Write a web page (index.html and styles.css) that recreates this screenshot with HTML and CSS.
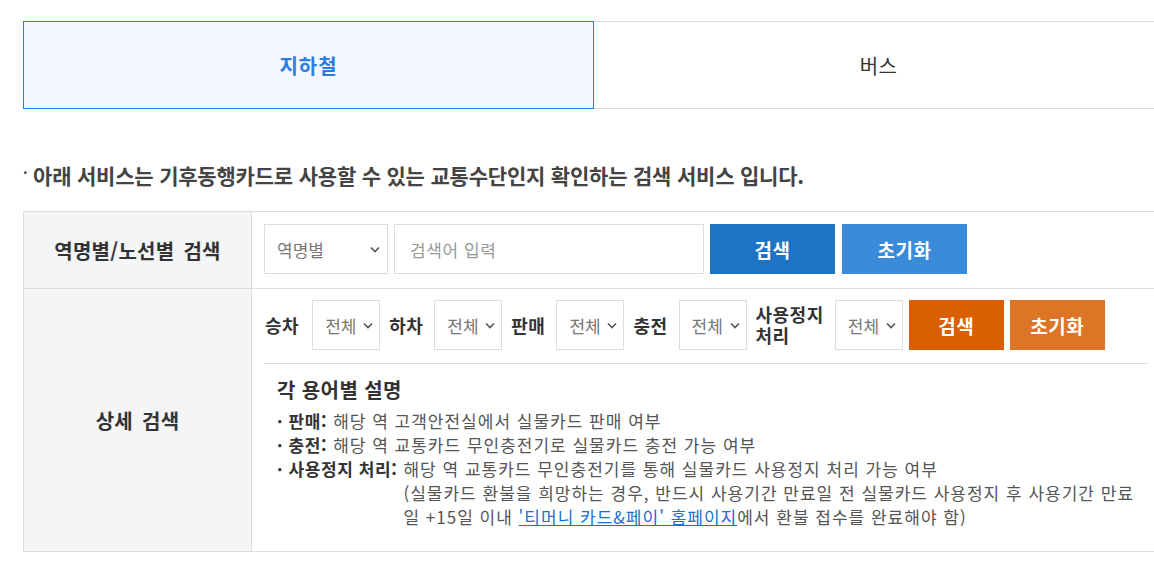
FILE: index.html
```html
<!DOCTYPE html>
<html lang="ko">
<head>
<meta charset="utf-8">
<link rel="stylesheet" href="styles.css">
</head>
<body>
<div class="wrap">
  <div class="tabs">
    <div class="tab active">지하철</div>
    <div class="tab">버스</div>
  </div>
  <p class="notice"><span class="dot">·</span> 아래 서비스는 기후동행카드로 사용할 수 있는 교통수단인지 확인하는 검색 서비스 입니다.</p>
  <div class="table">
    <div class="th">역명별/노선별 검색</div>
    <div class="td row1">
      <div class="sel sel-wide">역명별<svg class="chev" viewBox="0 0 10 6"><path d="M1 1l4 4 4-4" fill="none" stroke="#555" stroke-width="1.6"/></svg></div>
      <div class="input">검색어 입력</div>
      <button class="btn blue">검색</button>
      <button class="btn lblue">초기화</button>
    </div>
    <div class="th tall">상세 검색</div>
    <div class="td row2">
      <div class="controls">
        <span class="lab first">승차</span>
        <div class="sel sel-s">전체<svg class="chev" viewBox="0 0 10 6"><path d="M1 1l4 4 4-4" fill="none" stroke="#555" stroke-width="1.6"/></svg></div>
        <span class="lab">하차</span>
        <div class="sel sel-s">전체<svg class="chev" viewBox="0 0 10 6"><path d="M1 1l4 4 4-4" fill="none" stroke="#555" stroke-width="1.6"/></svg></div>
        <span class="lab">판매</span>
        <div class="sel sel-s">전체<svg class="chev" viewBox="0 0 10 6"><path d="M1 1l4 4 4-4" fill="none" stroke="#555" stroke-width="1.6"/></svg></div>
        <span class="lab">충전</span>
        <div class="sel sel-s">전체<svg class="chev" viewBox="0 0 10 6"><path d="M1 1l4 4 4-4" fill="none" stroke="#555" stroke-width="1.6"/></svg></div>
        <span class="lab two">사용정지<br>처리</span>
        <div class="sel sel-s">전체<svg class="chev" viewBox="0 0 10 6"><path d="M1 1l4 4 4-4" fill="none" stroke="#555" stroke-width="1.6"/></svg></div>
        <button class="btn orange">검색</button>
        <button class="btn lorange">초기화</button>
      </div>
      <div class="desc">
        <h3>각 용어별 설명</h3>
        <div class="item"><span class="b">· 판매:</span><span class="t">해당 역 고객안전실에서 실물카드 판매 여부</span></div>
        <div class="item"><span class="b">· 충전:</span><span class="t">해당 역 교통카드 무인충전기로 실물카드 충전 가능 여부</span></div>
        <div class="item"><span class="b">· 사용정지 처리:</span><span class="t">해당 역 교통카드 무인충전기를 통해 실물카드 사용정지 처리 가능 여부<br>(실물카드 환불을 희망하는 경우, 반드시 사용기간 만료일 전 실물카드 사용정지 후 사용기간 만료일 +15일 이내 <a href="#">'티머니 카드&amp;페이' 홈페이지</a>에서 환불 접수를 완료해야 함)</span></div>
      </div>
    </div>
  </div>
</div>
</body>
</html>
```

FILE: styles.css
```css
html, body {
  margin: 0;
  padding: 0;
  overflow: hidden;
  background: #fff;
}
body {
  font-family: "Noto Sans CJK KR", "Noto Sans", sans-serif;
  color: #333;
}
.wrap {
  width: 1140px;
  margin-left: 23px;
  padding-top: 21px;
}
.tabs {
  display: flex;
  height: 88px;
}
.tab {
  flex: 1;
  display: flex;
  align-items: center;
  justify-content: center;
  border-top: 1px solid #ddd;
  border-bottom: 1px solid #ddd;
  font-size: 20px;
  letter-spacing: 0.3px;
  color: #333;
  box-sizing: border-box;
}
.tab.active {
  border: 1px solid #2b7de0;
  background: #f3f8ff;
  color: #2b7de0;
  font-weight: 700;
  letter-spacing: 1px;
}
.notice {
  margin: 53px 0 0 0;
  font-size: 21px;
  font-weight: 700;
  color: #444;
  line-height: 26px;
  letter-spacing: -0.2px;
}
.notice .dot {
  position: relative;
  top: -6px;
  font-size: 14px;
  line-height: 0;
}
.table {
  margin-top: 23px;
  display: grid;
  grid-template-columns: 228px 1fr;
  border-top: 1px solid #ddd;
  border-left: 1px solid #ddd;
}
.th {
  background: #f4f5f7;
  border-right: 1px solid #ddd;
  border-bottom: 1px solid #ddd;
  display: flex;
  align-items: center;
  justify-content: center;
  font-size: 20px;
  letter-spacing: 0.3px;
  word-spacing: 3px;
  font-weight: 700;
  color: #333;
  height: 76px;
}
.th.tall {
  height: auto;
}
.td {
  border-bottom: 1px solid #ddd;
  padding: 12px 15px 0 12px;
}
.row1 {
  display: flex;
  align-items: flex-start;
  gap: 6px;
}
.sel {
  position: relative;
  box-sizing: border-box;
  height: 50px;
  border: 1px solid #ddd;
  background: #fff;
  display: flex;
  align-items: center;
  font-size: 17px;
  color: #777;
  padding-left: 12px;
}
.sel-wide { width: 124px; }
.sel-s { width: 68px; }
.chev {
  position: absolute;
  right: 6px;
  top: 21px;
  width: 10px;
  height: 7px;
}
.sel-wide .chev { right: 7px; }
.input {
  box-sizing: border-box;
  width: 310px;
  height: 50px;
  border: 1px solid #ddd;
  display: flex;
  align-items: center;
  padding-left: 15px;
  font-size: 17px;
  letter-spacing: 0.6px;
  color: #999;
}
.btn {
  border: 0;
  height: 50px;
  width: 125px;
  font-family: inherit;
  font-size: 19px;
  letter-spacing: 0.6px;
  font-weight: 700;
  color: #fff;
  padding: 0;
}
.blue { background: #1f73c4; }
.lblue { background: #3a8bd9; margin-left: 1px; }
.orange { background: #d95f02; width: 95px; margin-left: 6px; }
.lorange { background: #dc7526; width: 95px; margin-left: 6px; }
.row2 {
  padding-top: 11px;
}
.controls {
  display: flex;
  align-items: center;
  height: 50px;
  padding-bottom: 13px;
  border-bottom: 1px solid #ddd;
}
.lab {
  font-size: 18px;
  letter-spacing: 0.5px;
  font-weight: 700;
  color: #333;
  margin: 0 11px 0 0;
}
.lab.first {
  margin: 0 13px 0 1px;
}
.lab.two {
  line-height: 21px;
  margin-right: 11px;
}
.sel-s + .lab { margin-left: 9px; }
.desc {
  padding: 11px 0 22px 13px;
}
.desc h3 {
  margin: 0 0 4px 0;
  font-size: 20px;
  letter-spacing: 0.4px;
  font-weight: 700;
  color: #333;
  line-height: 30px;
}
.item {
  display: flex;
  font-size: 17px;
  letter-spacing: 1px;
  line-height: 24px;
  color: #555;
}
.item .b {
  font-weight: 700;
  color: #333;
  white-space: nowrap;
  margin-right: 6px;
  letter-spacing: 0.6px;
}
.item .t {
  flex: 1;
}
.item a {
  color: #1a6fd0;
  text-decoration: underline;
}
```
